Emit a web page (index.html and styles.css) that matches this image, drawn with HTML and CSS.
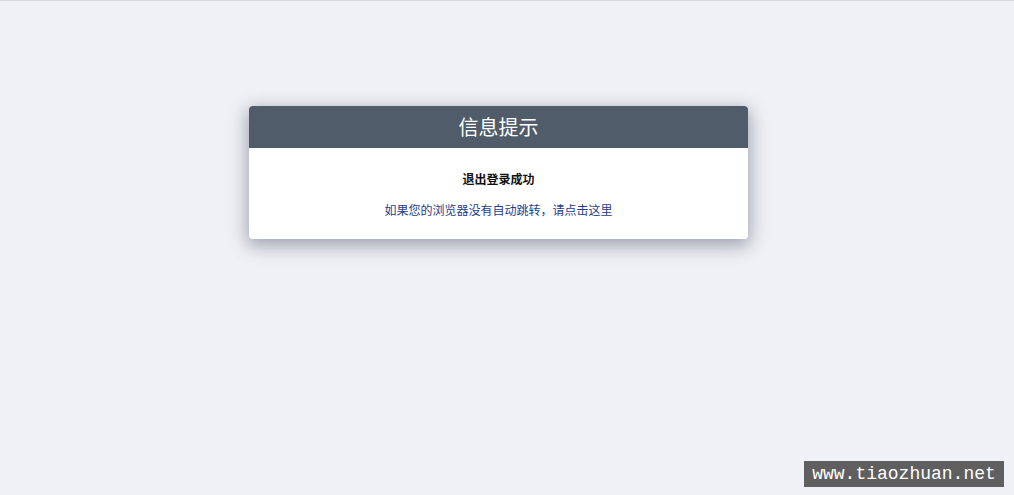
FILE: index.html
```html
<!DOCTYPE html>
<html lang="zh-CN">
<head>
    <meta charset="UTF-8">
    <meta name="viewport" content="width=device-width, initial-scale=1.0">
    <title>信息提示</title>
    <link rel="stylesheet" href="styles.css">
</head>
<body>

    <div class="page">
        <div class="msg-box">
            <div class="msg-title">信息提示</div>
            <div class="msg-body">
                <p class="msg-text">退出登录成功</p>
                <p class="msg-link"><a href="#">如果您的浏览器没有自动跳转，请点击这里</a></p>
            </div>
        </div>
    </div>

    <div class="watermark">www.tiaozhuan.net</div>

</body>
</html>
```

FILE: styles.css
```css
html, body {
    height: 100%;
}

body {
    font-family: "Liberation Sans", "Noto Sans CJK SC", sans-serif;
    margin: 0;
    padding: 0 17px 0 0;
    background-color: #f0f1f6;
    border-top: 1px solid #d6d7dc;
    box-sizing: border-box;
}

.page {
    padding-top: 105px;
}

.msg-box {
    width: 499px;
    margin: 0 auto;
    background-color: white;
    border-radius: 4px;
    box-shadow: 0 5px 18px 2px rgba(60, 70, 90, 0.45);
    overflow: hidden;
}

.msg-title {
    height: 40px;
    padding-top: 2px;
    line-height: 40px;
    background-color: #505c69;
    color: white;
    text-align: center;
    font-size: 20px;
}

.msg-body {
    padding: 24px 20px 20px;
    text-align: center;
    font-size: 12px;
}

.msg-text {
    margin: 0;
    line-height: 16px;
    font-weight: bold;
    color: #111;
}

.msg-link {
    margin: 15px 0 0;
    line-height: 16px;
}

.msg-link a {
    color: #1d3d8c;
    text-decoration: none;
}

.watermark {
    position: fixed;
    right: 10px;
    bottom: 8px;
    width: 200px;
    height: 26px;
    line-height: 26px;
    background-color: #5f5f5f;
    color: white;
    font-family: "Liberation Mono", monospace;
    font-size: 18px;
    text-align: center;
}
```
